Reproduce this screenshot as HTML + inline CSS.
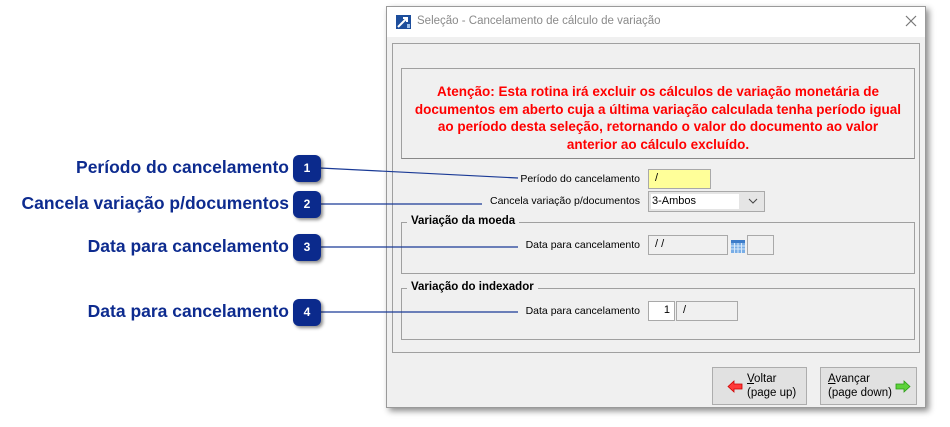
<!DOCTYPE html>
<html><head><meta charset="utf-8">
<style>
*{margin:0;padding:0;box-sizing:border-box}
body{width:950px;height:427px;background:#fff;position:relative;overflow:hidden;font-family:"Liberation Sans",sans-serif;font-size:11px;color:#000}
.a{position:absolute}
.win{left:386px;top:6px;width:540px;height:402px;background:#f0f0f0;border:1px solid #9a9a9a;box-shadow:3px 3px 6px rgba(0,0,0,.45)}
.title{left:0;top:0;width:538px;height:30px;background:#fff}
.lbl{font-size:10.5px;text-align:right;white-space:nowrap}
.fld{border:1px solid #a9a9a9;background:#f0f0f0;font-size:11px}
.cl{font-family:"Liberation Sans",sans-serif;font-weight:bold;color:#0d2b8f;font-size:17.5px;text-align:right;white-space:nowrap}
.bd{width:28px;height:27px;background:#0b2a8c;border-radius:6px;color:#fff;font-weight:bold;font-size:12px;text-align:center;line-height:27px;box-shadow:2px 2px 3px rgba(0,0,0,.45)}
.grp{border:1px solid #a0a0a0}
.gt{font-weight:bold;font-size:11.5px;background:#f0f0f0;padding:0 4px}
.btn{border:1px solid #adadad;background:#e1e1e1;font-size:11.5px;line-height:14px}
</style></head><body>

<div class="a win">
  <div class="a title"></div>
  <svg class="a" style="left:9px;top:8px" width="15" height="14"><rect width="15" height="14" fill="#1d4e9c"/><path d="M2 12 L11 3 M7 3 L11 3 L11 7" stroke="#fff" stroke-width="2" fill="none"/><rect x="11" y="9" width="3" height="4" fill="#9fc0ea"/></svg>
  <div class="a" style="left:30px;top:8px;font-size:11.5px;color:#8a8a8a">Seleção - Cancelamento de cálculo de variação</div>
  <svg class="a" style="left:518px;top:8px" width="12" height="12"><path d="M1 1L11 11M11 1L1 11" stroke="#777" stroke-width="1.2"/></svg>
  <div class="a" style="left:5px;top:36px;width:528px;height:310px;border:1px solid #a0a0a0"></div>
  <div class="a" style="left:14px;top:61px;width:514px;height:91px;border:1px solid #a0a0a0;border-bottom-color:#888"></div>
  <div class="a" style="left:14px;top:76px;width:514px;text-align:center;color:#ff0000;font-weight:bold;font-size:13.5px;line-height:17.7px">Atenção: Esta rotina irá excluir os cálculos de variação monetária de<br>documentos em aberto cuja a última variação calculada tenha período igual<br>ao período desta seleção, retornando o valor do documento ao valor<br>anterior ao cálculo excluído.</div>

  <div class="a lbl" style="right:285px;top:166px">Período do cancelamento</div>
  <div class="a fld" style="left:261px;top:162px;width:63px;height:20px;background:#ffff99;padding:2px 6px">/</div>
  <div class="a lbl" style="right:285px;top:188px">Cancela variação p/documentos</div>
  <div class="a fld" style="left:261px;top:184px;width:117px;height:21px;background:#e5e5e5">
    <div class="a" style="left:2px;top:2px;width:88px;height:15px;background:#fff;padding-left:1px;line-height:15px">3-Ambos</div>
    <svg class="a" style="left:99px;top:6px" width="10" height="7"><path d="M1 1L5 5L9 1" stroke="#444" fill="none"/></svg>
  </div>

  <div class="a grp" style="left:14px;top:215px;width:514px;height:52px"></div>
  <div class="a gt" style="left:20px;top:208px">Variação da moeda</div>
  <div class="a lbl" style="right:285px;top:232px">Data para cancelamento</div>
  <div class="a fld" style="left:261px;top:228px;width:80px;height:20px;padding:2px 6px">/ /</div>
  <svg class="a" style="left:344px;top:231px" width="14" height="15"><rect x="0" y="2" width="14" height="13" fill="#7aaee6"/><rect x="0" y="2" width="14" height="3" fill="#3d7cc9"/><g stroke="#d7e8fa" stroke-width="1"><path d="M0 8H14M0 11H14M3.5 5V15M7 5V15M10.5 5V15"/></g></svg>
  <div class="a fld" style="left:360px;top:228px;width:27px;height:20px"></div>

  <div class="a grp" style="left:14px;top:281px;width:514px;height:52px"></div>
  <div class="a gt" style="left:20px;top:274px">Variação do indexador</div>
  <div class="a lbl" style="right:285px;top:298px">Data para cancelamento</div>
  <div class="a fld" style="left:261px;top:294px;width:27px;height:20px;background:#fff;text-align:right;padding:2px 4px">1</div>
  <div class="a fld" style="left:289px;top:294px;width:62px;height:20px;padding:2px 6px">/</div>

  <div class="a btn" style="left:325px;top:360px;width:95px;height:38px">
    <svg class="a" style="left:14px;top:12px" width="16" height="13"><path d="M1 6.5L7 1V4H15V9H7V12Z" fill="#ff3a3a" stroke="#c00" stroke-width="0.8"/></svg>
    <div class="a" style="left:34px;top:4px"><u>V</u>oltar<br>(page up)</div>
  </div>
  <div class="a btn" style="left:433px;top:360px;width:97px;height:38px">
    <div class="a" style="left:7px;top:4px"><u>A</u>vançar<br>(page down)</div>
    <svg class="a" style="left:74px;top:12px" width="16" height="13"><path d="M15 6.5L9 1V4H1V9H9V12Z" fill="#5dd23a" stroke="#2a9a14" stroke-width="0.8"/></svg>
  </div>
</div>

<svg class="a" style="left:0;top:0" width="950" height="427">
  <g stroke="#1a3a96" stroke-width="1.2" fill="none">
    <path d="M320 168L518 178"/>
    <path d="M320 204L482 204"/>
    <path d="M320 247L518 247"/>
    <path d="M320 312L518 312"/>
  </g>
</svg>

<div class="a cl" style="right:661px;top:157px">Período do cancelamento</div>
<div class="a bd" style="left:293px;top:155px">1</div>
<div class="a cl" style="right:661px;top:193px">Cancela variação p/documentos</div>
<div class="a bd" style="left:293px;top:191px">2</div>
<div class="a cl" style="right:661px;top:236px">Data para cancelamento</div>
<div class="a bd" style="left:293px;top:234px">3</div>
<div class="a cl" style="right:661px;top:301px">Data para cancelamento</div>
<div class="a bd" style="left:293px;top:299px">4</div>
</body></html>
